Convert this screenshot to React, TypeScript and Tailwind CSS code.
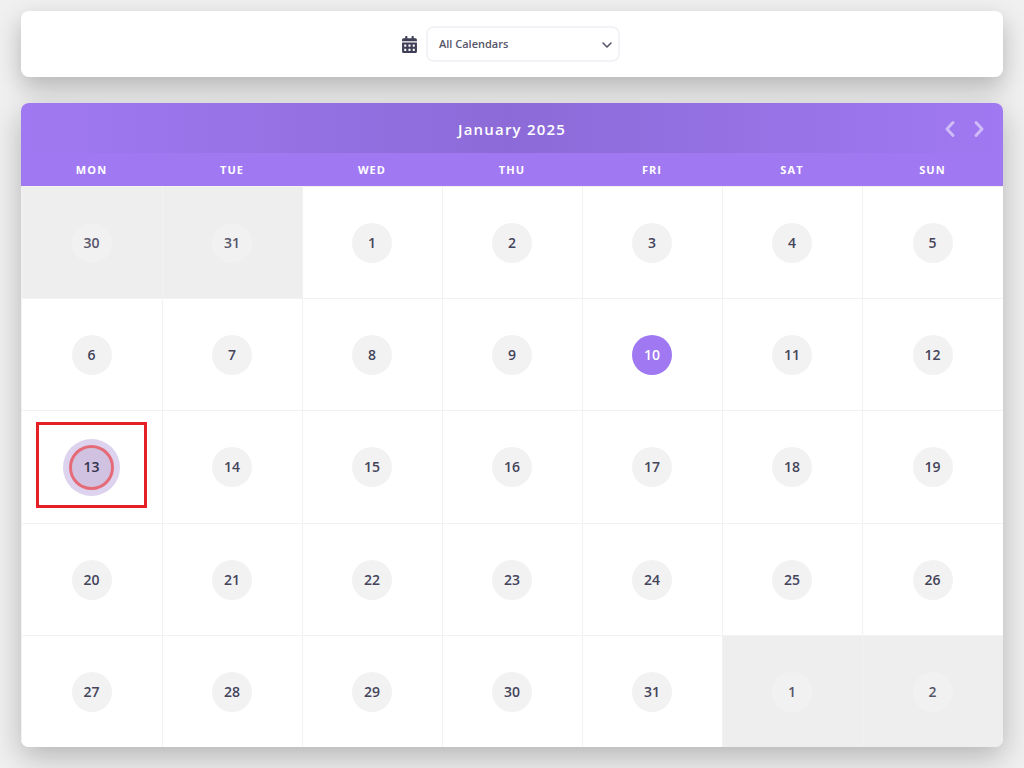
import { FC } from 'react';
import { FaCalendarAlt } from 'react-icons/fa';

const WEEK_DAYS = ['MON', 'TUE', 'WED', 'THU', 'FRI', 'SAT', 'SUN'];

interface DayItem {
  label: number;
  muted?: boolean;
  today?: boolean;
  marked?: boolean;
}

const january: DayItem[] = [
  { label: 30, muted: true },
  { label: 31, muted: true },
  ...Array.from({ length: 31 }, (_, i) => ({
    label: i + 1,
    today: i + 1 === 10,
    marked: i + 1 === 13,
  })),
  { label: 1, muted: true },
  { label: 2, muted: true },
];

const DayCell: FC<{ day: DayItem }> = ({ day }) => {
  let circle = 'bg-[#f2f2f3] text-[#44445a]';
  if (day.muted) circle = 'bg-[#f1f1f1] text-[#55556a]';
  if (day.today) circle = 'bg-[#a079f2] text-white';
  if (day.marked) circle = 'bg-[#d0c2e0] text-[#33334a]';

  return (
    <div
      className={`relative flex items-center justify-center border-l border-t border-l-[#f2f2f2] border-t-[#f2f2f2] pr-[1px] pt-[1px] ${
        day.muted ? 'bg-[#eeeeee]' : 'bg-white'
      }`}
    >
      {day.marked && <div className="absolute h-[57px] w-[57px] rounded-full bg-[#ddd3ef]" />}
      <div
        className={`relative flex h-10 w-10 items-center justify-center rounded-full text-sm font-semibold ${circle}`}
      >
        {day.label}
        {day.marked && (
          <div className="absolute -inset-[2.5px] rounded-full border-[3px] border-[#e56b78]" />
        )}
      </div>
    </div>
  );
};

const App: FC = () => {
  return (
    <div className="relative h-[768px] w-[1024px] overflow-hidden bg-[#f0f0f0] px-[21px] pt-[11px] font-['Open_Sans',sans-serif]">
      <div className="flex h-[66px] items-center justify-center gap-[9px] rounded-lg bg-white pr-[2px] shadow-[0_10px_25px_rgba(0,0,0,0.25)]">
        <FaCalendarAlt className="h-[17px] w-[15px] text-[#3f3f55]" />
        <div className="flex h-9 w-[194px] items-center justify-between rounded-lg border-2 border-[#f4f2f7] pl-[11px] pr-[3px] pt-[1px] text-[11px] font-semibold text-[#55556a]">
          <span>All Calendars</span>
          <svg
            xmlns="http://www.w3.org/2000/svg"
            className="h-4 w-4 text-[#55556a]"
            fill="none"
            viewBox="0 0 24 24"
            stroke="currentColor"
          >
            <path strokeLinecap="round" strokeLinejoin="round" strokeWidth={2.4} d="M6 9l6 6 6-6" />
          </svg>
        </div>
      </div>

      <div className="mt-[26px] h-[644px] overflow-hidden rounded-lg bg-white shadow-[0_10px_30px_rgba(0,0,0,0.25)]">
        <div className="relative flex h-[50px] items-center justify-center bg-gradient-to-r from-[#a079f2] via-[#8c6bd8] to-[#a079f2] pt-[2px]">
          <span className="text-[15px] font-semibold tracking-[1.2px] text-white">January 2025</span>
          <div className="absolute right-[14px] flex items-center gap-[9px] text-white/50">
            <svg xmlns="http://www.w3.org/2000/svg" className="h-5 w-5" fill="none" viewBox="0 0 20 20" stroke="currentColor">
              <path strokeLinecap="round" strokeLinejoin="round" strokeWidth={3} d="M13 3.5l-6 6.5 6 6.5" />
            </svg>
            <svg xmlns="http://www.w3.org/2000/svg" className="h-5 w-5" fill="none" viewBox="0 0 20 20" stroke="currentColor">
              <path strokeLinecap="round" strokeLinejoin="round" strokeWidth={3} d="M7 3.5l6 6.5-6 6.5" />
            </svg>
          </div>
        </div>

        <div className="grid h-[33px] grid-cols-[141px_repeat(5,140px)_141px] bg-[#a079f2] pt-[1px]">
          {WEEK_DAYS.map((d) => (
            <div key={d} className="flex items-center justify-center text-[11px] font-bold tracking-[1.1px] text-white">
              {d}
            </div>
          ))}
        </div>

        <div className="grid h-[561px] grid-cols-[141px_repeat(5,140px)_141px] grid-rows-5">
          {january.map((day, i) => (
            <DayCell key={i} day={day} />
          ))}
        </div>
      </div>

      {/* annotation box */}
      <div className="absolute left-[36px] top-[422px] h-[86px] w-[111px] border-[3px] border-[#e61e25]" />
    </div>
  );
};

export default App;
